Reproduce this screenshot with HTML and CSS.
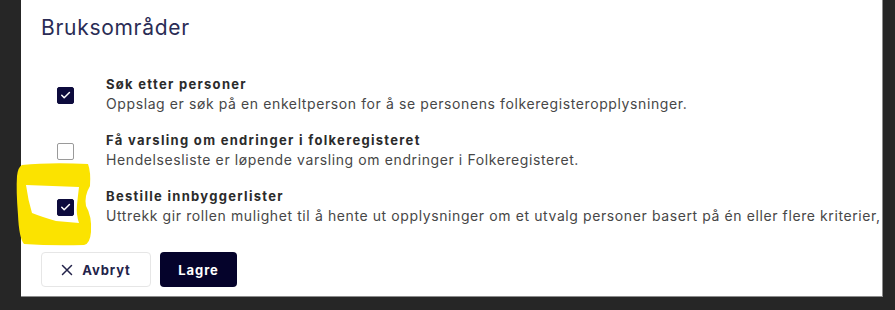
FILE: index.html
```html
<!DOCTYPE html>
<html lang="no">
<head>
  <meta charset="UTF-8">
  <title>Bruksområder</title>
  <meta name="viewport" content="width=device-width, initial-scale=1.0">
  <link rel="stylesheet" href="styles.css">
</head>
<body>
  <!-- Dialog panel -->
  <div class="panel">
    <h2 class="panel-title">Bruksområder</h2>

    <ul class="usage-list">
      <li class="usage-item">
        <span class="check checked">
          <svg viewBox="0 0 16 16" width="16" height="16"><path d="M4 8.3l2.6 2.6L12.2 5.3" fill="none" stroke="#fff" stroke-width="1.6" stroke-linecap="round" stroke-linejoin="round"/></svg>
        </span>
        <div class="usage-text">
          <div class="usage-label">Søk etter personer</div>
          <div class="usage-desc">Oppslag er søk på en enkeltperson for å se personens folkeregisteropplysninger.</div>
        </div>
      </li>
      <li class="usage-item">
        <span class="check"></span>
        <div class="usage-text">
          <div class="usage-label">Få varsling om endringer i folkeregisteret</div>
          <div class="usage-desc">Hendelsesliste er løpende varsling om endringer i Folkeregisteret.</div>
        </div>
      </li>
      <li class="usage-item">
        <span class="check checked">
          <svg viewBox="0 0 16 16" width="16" height="16"><path d="M4 8.3l2.6 2.6L12.2 5.3" fill="none" stroke="#fff" stroke-width="1.6" stroke-linecap="round" stroke-linejoin="round"/></svg>
        </span>
        <div class="usage-text">
          <div class="usage-label">Bestille innbyggerlister</div>
          <div class="usage-desc">Uttrekk gir rollen mulighet til å hente ut opplysninger om et utvalg personer basert på én eller flere kriterier,</div>
        </div>
      </li>
    </ul>

    <div class="actions">
      <button class="btn btn-secondary">
        <svg viewBox="0 0 12 12" width="12" height="12"><path d="M1.5 1.5l9 9M10.5 1.5l-9 9" stroke="#23234a" stroke-width="1.5" stroke-linecap="round"/></svg>
        Avbryt
      </button>
      <button class="btn btn-primary">Lagre</button>
    </div>
  </div>

  <!-- Yellow marker annotation -->
  <svg class="marker" width="895" height="310" viewBox="0 0 895 310">
    <path fill="#fbe300" fill-rule="evenodd"
      d="M22 165 Q50 162 88 164 Q91 172 90 186 Q84 196 86 206 Q92 216 91 232 Q90 244 84 245 Q52 246 24 244 Q19 238 18 215 Q16 190 17 176 Q18 167 22 165 Z
         M26 185 L79 187 Q78 195 77 205 Q76 214 79 223 L56 221 Q42 217 32 213 Q28 200 26 185 Z"/>
  </svg>
</body>
</html>
```

FILE: styles.css
```css
/* ====== RESET ====== */
* {
  margin: 0;
  padding: 0;
  box-sizing: border-box;
}
ul {
  list-style: none;
}

/* ====== PAGE ====== */
body {
  font-family: Inter, "Noto Sans", sans-serif;
  background-color: #262626;
  width: 895px;
  height: 310px;
  overflow: hidden;
  position: relative;
}

/* ====== PANEL ====== */
.panel {
  margin-left: 21px;
  width: 862px;
  height: 297px;
  background-color: #fff;
  border-right: 1px solid #8c8c8c;
  border-bottom: 1px solid #8c8c8c;
  padding: 16px 0 0 20px;
  overflow: hidden;
}
.panel-title {
  font-size: 21px;
  line-height: 24px;
  font-weight: 400;
  letter-spacing: 0.7px;
  color: #2a2c55;
  margin-bottom: 34px;
}

/* ====== USAGE LIST ====== */
.usage-list {
  display: flex;
  flex-direction: column;
  gap: 16px;
}
.usage-item {
  display: flex;
  align-items: center;
  padding-left: 16px;
  gap: 32px;
}
.check {
  flex: none;
  width: 17px;
  height: 17px;
  border: 1px solid #9a9a9a;
  border-radius: 2px;
  background-color: #fff;
  display: flex;
  align-items: center;
  justify-content: center;
  margin-top: 2px;
}
.check.checked {
  background-color: #0d0b3d;
  border-color: #0d0b3d;
}
.usage-text {
  white-space: nowrap;
}
.usage-label {
  font-size: 13px;
  line-height: 20px;
  font-weight: 700;
  letter-spacing: 1.3px;
  color: #2b2b2b;
}
.usage-desc {
  font-size: 14px;
  line-height: 20px;
  letter-spacing: 0.6px;
  color: #474747;
}

/* ====== BUTTONS ====== */
.actions {
  display: flex;
  gap: 9px;
  margin-top: 26px;
}
.btn {
  font-family: Inter, "Noto Sans", sans-serif;
  font-size: 13px;
  font-weight: 700;
  letter-spacing: 0.9px;
  height: 35px;
  border-radius: 4px;
  display: flex;
  align-items: center;
  justify-content: center;
  gap: 9px;
}
.btn-secondary {
  width: 110px;
  background-color: #fff;
  color: #23234a;
  border: 1px solid #e6e6e6;
}
.btn-primary {
  width: 77px;
  background-color: #05032b;
  color: #fff;
  border: none;
}

/* ====== ANNOTATION ====== */
.marker {
  position: absolute;
  top: 0;
  left: 0;
  pointer-events: none;
}
```
